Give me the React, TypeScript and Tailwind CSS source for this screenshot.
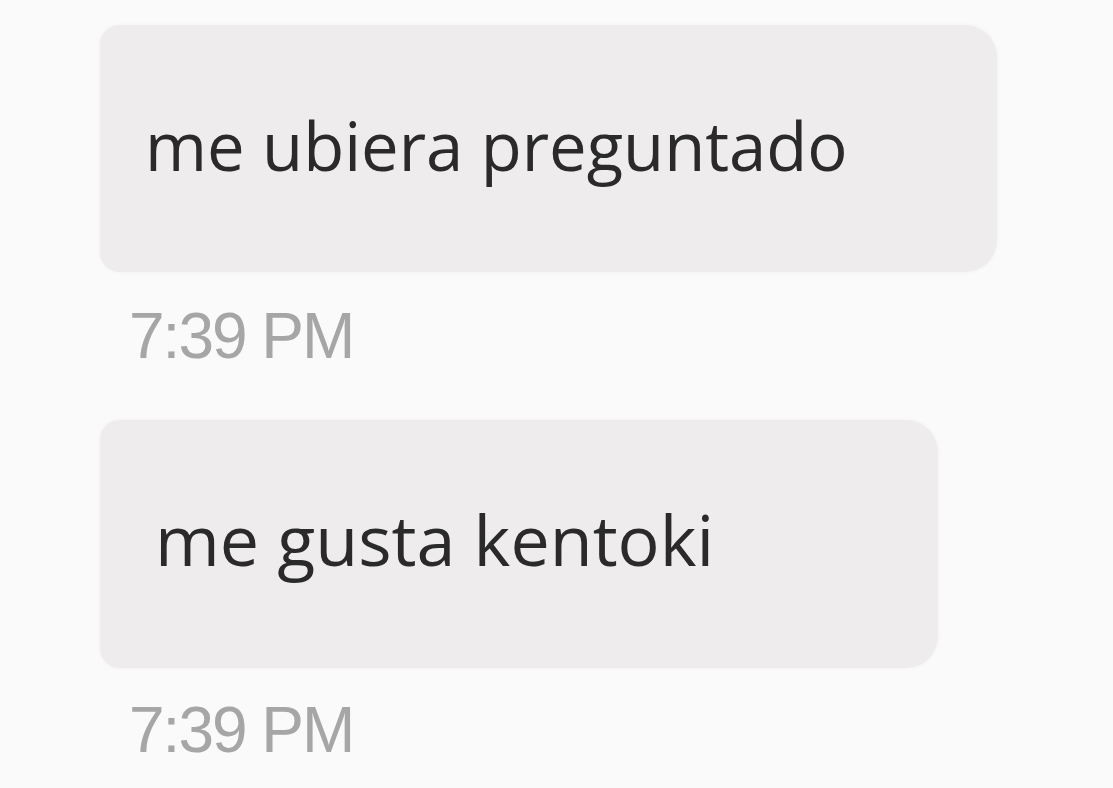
const messages = [
  { text: "me ubiera preguntado", time: "7:39 PM" },
  { text: "me gusta kentoki", time: "7:39 PM" },
];

export default function App() {
  return (
    <div className="flex min-h-screen w-full flex-col bg-[#fafafa] pl-[100px] pt-[25px]">
      {/* first bubble */}
      <div className="flex h-[247px] w-[897px] items-start rounded-l-[20px] rounded-r-[32px] bg-[#efeced] pl-[45px] pt-[87px] shadow-[0_0_4px_rgba(0,0,0,0.04)]">
        <p className="font-['Open_Sans',sans-serif] text-[67px] leading-none text-[#2a2a2a]">
          {messages[0].text}
        </p>
      </div>
      <span className="ml-[29px] mt-[32px] font-['Liberation_Sans',Arial,sans-serif] text-[64px] leading-none tracking-[-2px] text-[#a6a6a6]">
        {messages[0].time}
      </span>

      {/* second bubble */}
      <div className="mt-[52px] flex h-[248px] w-[838px] items-start rounded-l-[20px] rounded-r-[32px] bg-[#efeced] pl-[55px] pt-[84px] shadow-[0_0_4px_rgba(0,0,0,0.04)]">
        <p className="font-['Open_Sans',sans-serif] text-[70px] leading-none text-[#2a2a2a]">
          {messages[1].text}
        </p>
      </div>
      <span className="ml-[29px] mt-[30px] font-['Liberation_Sans',Arial,sans-serif] text-[64px] leading-none tracking-[-2px] text-[#a6a6a6]">
        {messages[1].time}
      </span>
    </div>
  );
}
